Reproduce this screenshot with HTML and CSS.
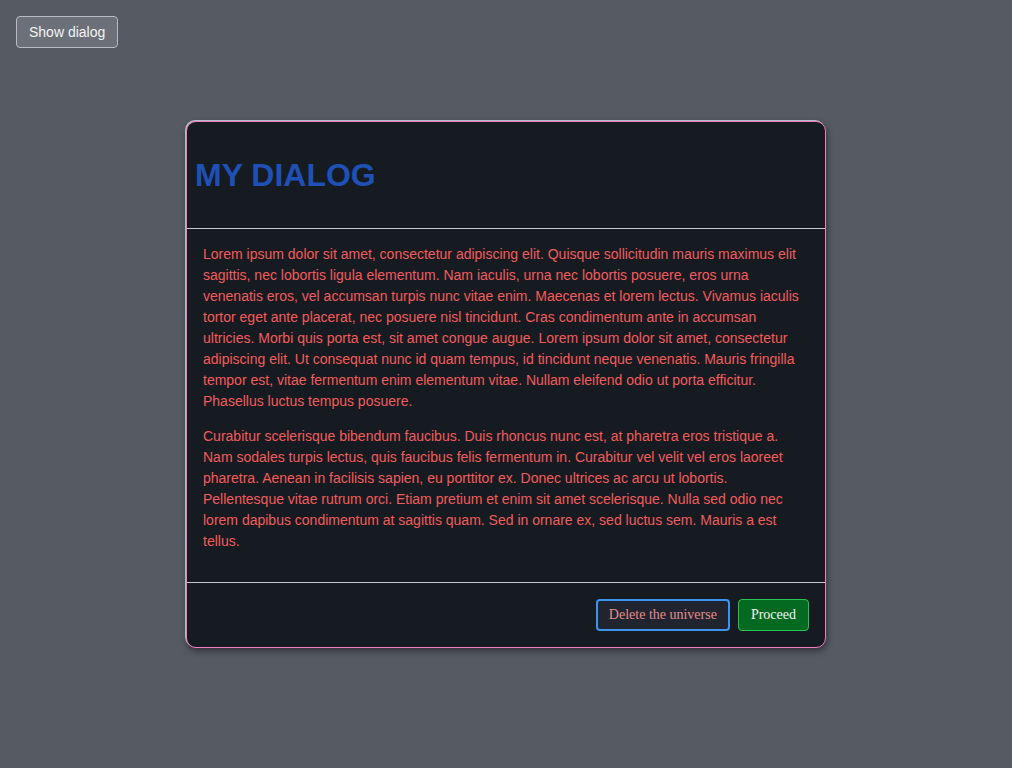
FILE: index.html
```html
<!DOCTYPE html>
<html lang="en">
<head>
<meta charset="utf-8">
<title>Dialog</title>
<link rel="stylesheet" href="styles.css">
</head>
<body>
<button class="show-btn">Show dialog</button>
<div class="backdrop">
  <div class="dialog">
    <header class="dialog-header">
      <h1 class="dialog-title">MY DIALOG</h1>
    </header>
    <div class="dialog-body">
      <p>Lorem ipsum dolor sit amet, consectetur adipiscing elit. Quisque sollicitudin mauris maximus elit sagittis, nec lobortis ligula elementum. Nam iaculis, urna nec lobortis posuere, eros urna venenatis eros, vel accumsan turpis nunc vitae enim. Maecenas et lorem lectus. Vivamus iaculis tortor eget ante placerat, nec posuere nisl tincidunt. Cras condimentum ante in accumsan ultricies. Morbi quis porta est, sit amet congue augue. Lorem ipsum dolor sit amet, consectetur adipiscing elit. Ut consequat nunc id quam tempus, id tincidunt neque venenatis. Mauris fringilla tempor est, vitae fermentum enim elementum vitae. Nullam eleifend odio ut porta efficitur. Phasellus luctus tempus posuere.</p>
      <p>Curabitur scelerisque bibendum faucibus. Duis rhoncus nunc est, at pharetra eros tristique a. Nam sodales turpis lectus, quis faucibus felis fermentum in. Curabitur vel velit vel eros laoreet pharetra. Aenean in facilisis sapien, eu porttitor ex. Donec ultrices ac arcu ut lobortis. Pellentesque vitae rutrum orci. Etiam pretium et enim sit amet scelerisque. Nulla sed odio nec lorem dapibus condimentum at sagittis quam. Sed in ornare ex, sed luctus sem. Mauris a est tellus.</p>
    </div>
    <footer class="dialog-footer">
      <button class="btn btn-danger">Delete the universe</button>
      <button class="btn btn-primary">Proceed</button>
    </footer>
  </div>
</div>
</body>
</html>
```

FILE: styles.css
```css
html, body {
  margin: 0;
  padding: 0;
  height: 100%;
}
body {
  background: #565a62;
  font-family: "Liberation Sans", Arial, sans-serif;
  position: relative;
}
.show-btn {
  position: absolute;
  left: 16px;
  top: 16px;
  height: 32px;
  padding: 0 12px;
  background: #6b7079;
  border: 1px solid #b6bac2;
  border-radius: 4px;
  color: #f2f3f5;
  font-family: "Liberation Sans", Arial, sans-serif;
  font-size: 14px;
}
.backdrop {
  display: flex;
  justify-content: center;
  padding-top: 121px;
}
.dialog {
  width: 638px;
  background: #161b22;
  border: 1px solid #f080c0;
  border-radius: 10px;
  box-shadow: -1px -1px 0 #b8bcc4, 1px 3px 7px rgba(0, 0, 0, 0.45);
  overflow: hidden;
}
.dialog-header {
  height: 106px;
  display: flex;
  align-items: center;
  padding: 0 8px;
  border-bottom: 1px solid #c5c9d1;
}
.dialog-title {
  margin: 0;
  font-size: 32px;
  font-weight: bold;
  color: #1f50b6;
}
.dialog-body {
  padding: 15px 16px 16px;
  color: #f25c5c;
  font-size: 14px;
  line-height: 21px;
  border-bottom: 1px solid #c5c9d1;
}
.dialog-body p {
  margin: 0 0 14px;
}
.dialog-footer {
  display: flex;
  justify-content: flex-end;
  gap: 8px;
  padding: 16px;
}
.btn {
  height: 32px;
  padding: 0 11px;
  border-radius: 4px;
  font-family: "Liberation Serif", "Times New Roman", serif;
  font-size: 14px;
}
.btn-danger {
  background: #1f242e;
  border: 2px solid #3d94ef;
  color: #e68c8c;
}
.btn-primary {
  background: #046a22;
  border: 1px solid #2bc255;
  color: #f1f4f1;
  padding: 0 12px;
}
```
